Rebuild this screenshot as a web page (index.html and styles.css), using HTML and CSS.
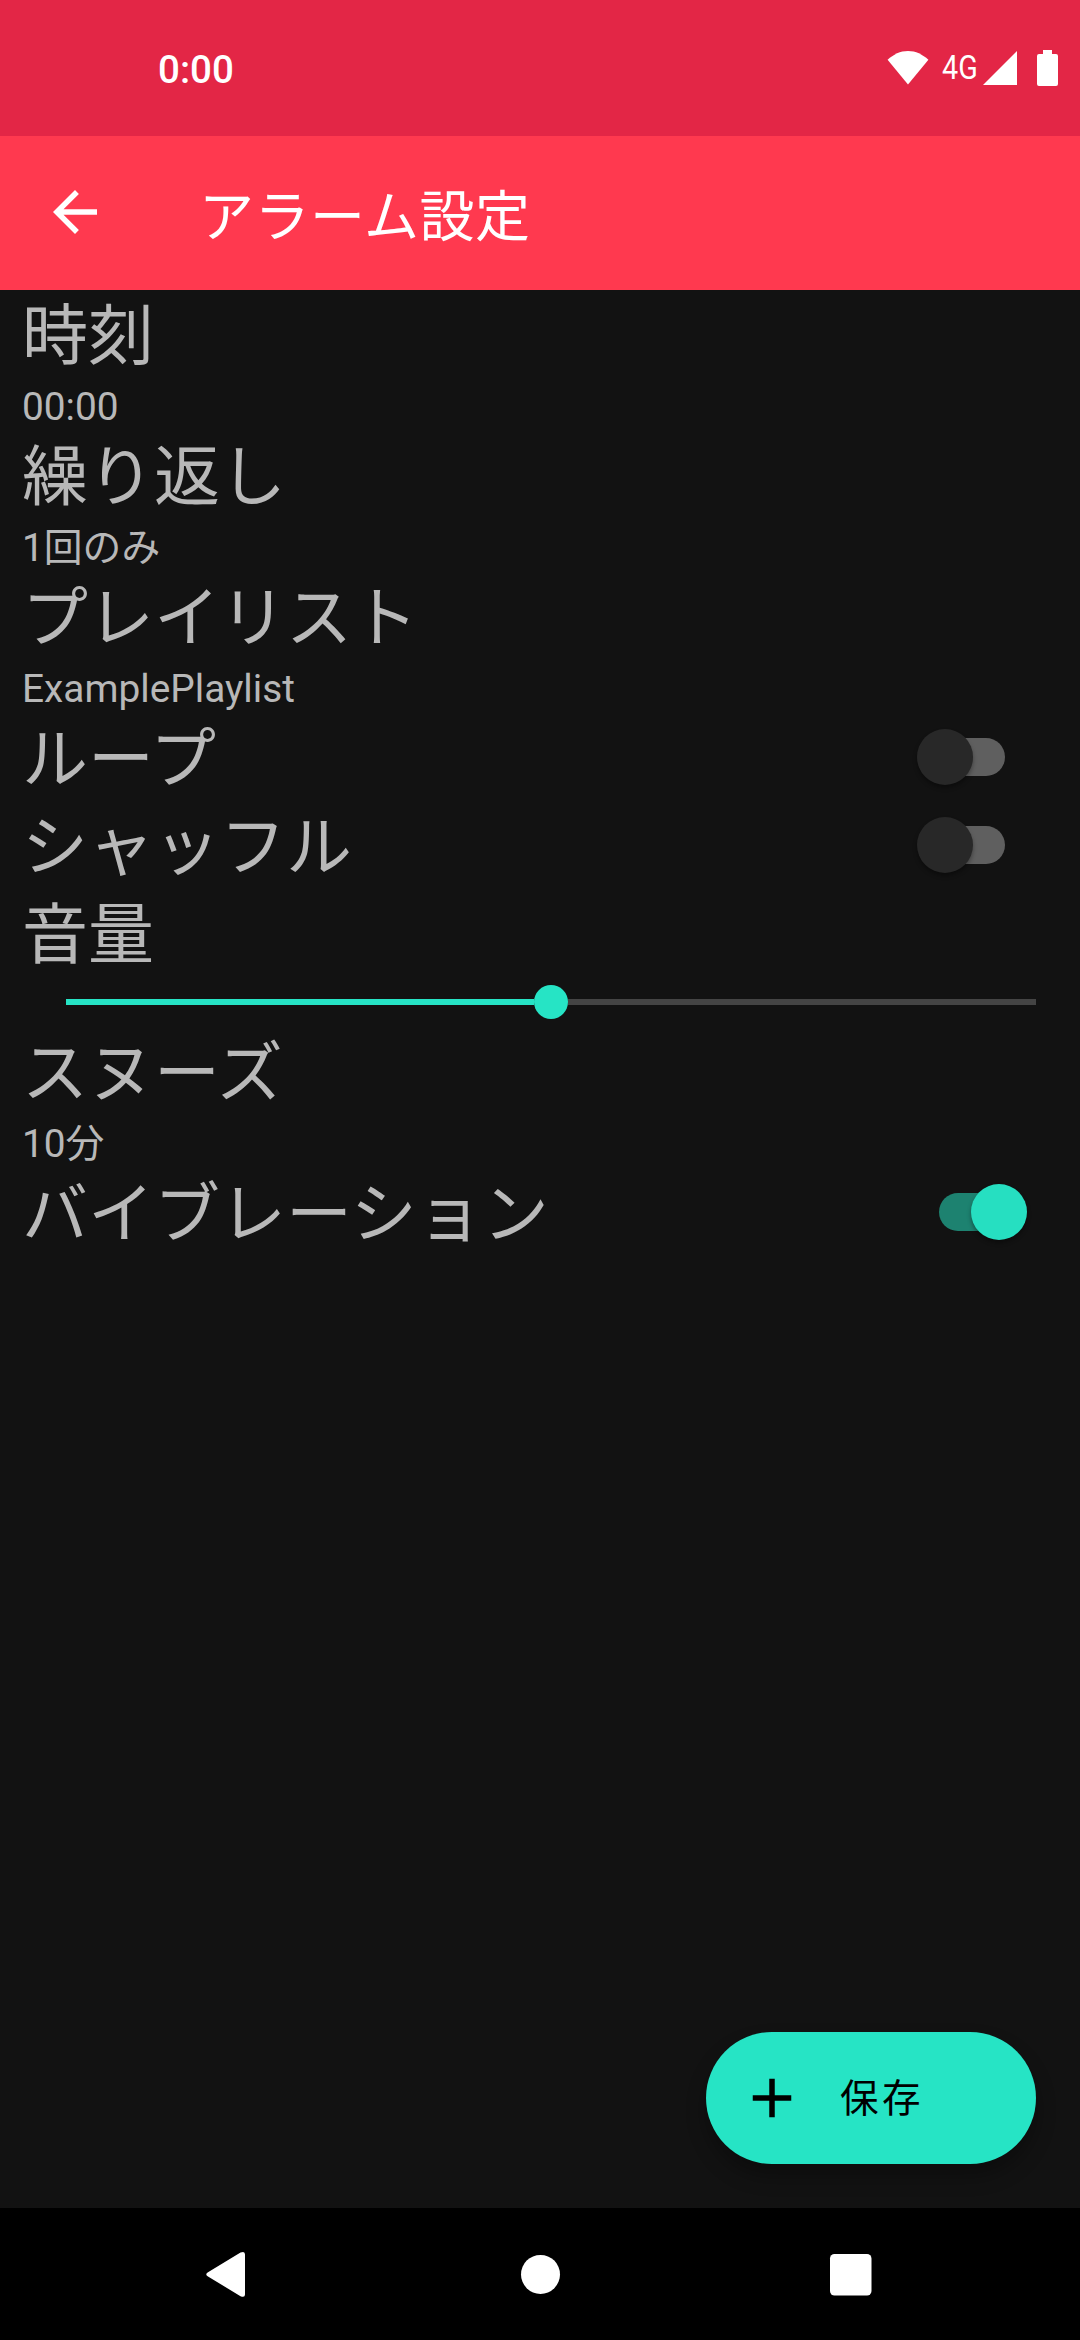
FILE: index.html
```html
<!DOCTYPE html>
<html lang="ja">
<head>
<meta charset="utf-8">
<title>アラーム設定</title>
<link rel="stylesheet" href="styles.css">
</head>
<body>
<div class="screen">
  <header class="status-bar">
    <span class="clock">0:00</span>
    <div class="status-icons">
      <svg class="wifi" viewBox="0 0 42 36"><path d="M21 35.500 0 10C6 4.500 13 1 21 1s15 3.500 21 9z"/></svg>
      <span class="network">4G</span>
      <svg class="signal" viewBox="0 0 34 35"><path d="M0 35 34 1v34z"/></svg>
      <svg class="battery" viewBox="0 0 21 36"><path d="M6 0h9v4h4q2 0 2 2v28q0 2-2 2H2q-2 0-2-2V6q0-2 2-2h4z"/></svg>
    </div>
  </header>
  <div class="app-bar">
    <svg class="back" viewBox="0 0 24 24"><path d="M20 11H7.830l5.590-5.590L12 4l-8 8 8 8 1.410-1.410L7.830 13H20v-2z"/></svg>
    <h1 class="title">アラーム設定</h1>
  </div>
  <main class="settings">
    <div class="label">時刻</div>
    <div class="value">00:00</div>
    <div class="label">繰り返し</div>
    <div class="value">1回のみ</div>
    <div class="label">プレイリスト</div>
    <div class="value">ExamplePlaylist</div>
    <div class="toggle-row inset"><span class="label">ループ</span><span class="switch"><span class="thumb"></span></span></div>
    <div class="toggle-row inset"><span class="label">シャッフル</span><span class="switch"><span class="thumb"></span></span></div>
    <div class="label">音量</div>
    <div class="slider"><span class="filled"></span><span class="knob"></span><span class="rest"></span></div>
    <div class="label">スヌーズ</div>
    <div class="value">10分</div>
    <div class="toggle-row"><span class="label">バイブレーション</span><span class="switch on"><span class="thumb"></span></span></div>
  </main>
  <div class="actions">
    <button class="save">
      <svg class="plus" viewBox="0 0 24 24"><path d="M19 13h-6v6h-2v-6H5v-2h6V5h2v6h6z"/></svg>
      <span class="save-text">保存</span>
    </button>
  </div>
  <nav class="nav-bar">
    <svg viewBox="0 0 60 60"><path d="M14 28.300 46.500 8.600Q51 6.500 51 10.500v40Q51 54 46.500 52.200L14 32.500q-3.500-2.100 0-4.200z"/></svg>
    <svg viewBox="0 0 60 60"><circle cx="32.500" cy="30.400" r="19.500"/></svg>
    <svg viewBox="0 0 60 60"><rect x="9" y="10" width="41.500" height="41.500" rx="4.500"/></svg>
  </nav>
</div>
</body>
</html>
```
FILE: styles.css
```css
* { box-sizing: border-box; }
body {
  margin: 0;
  background: #121212;
  font-family: Roboto, "Noto Sans CJK JP", sans-serif;
}
.screen {
  display: flex;
  flex-direction: column;
  width: 1080px;
  height: 2340px;
  background: #121212;
}
svg { display: block; flex: none; fill: currentColor; }

.status-bar {
  display: flex;
  justify-content: space-between;
  height: 136px;
  padding: 0 22px 0 158px;
  background: #e32646;
  color: #fff;
}
.clock { padding-top: 47px; font-size: 38.5px; font-weight: 500; line-height: 46px; }
.status-icons { display: flex; align-items: flex-start; padding-top: 50px; }
.wifi { width: 42px; height: 35px; }
.network {
  width: 41px;
  margin: -2px 0 0 13px;
  font-size: 33px;
  line-height: 40px;
  transform: scaleX(.87);
  transform-origin: left;
}
.signal { width: 34px; height: 35px; }
.battery { width: 21px; height: 36px; margin-left: 20px; }

.app-bar {
  display: flex;
  align-items: center;
  height: 154px;
  padding: 0 42px;
  background: #ff394f;
  color: #fff;
}
.back { width: 66px; height: 66px; margin-top: -3px; }
.title {
  margin: 0 0 0 91px;
  padding-top: 7px;
  font-size: 55px;
  font-weight: 400;
  line-height: 80px;
  letter-spacing: .55px;
}

.settings {
  display: flex;
  flex-direction: column;
  flex: 1;
  padding: 0 22px;
  color: #b8b8b8;
}
.label { height: 88px; padding-top: 3px; font-size: 66px; line-height: 88px; white-space: nowrap; }
.value { height: 53px; padding-top: 2px; font-size: 38.8px; line-height: 53px; white-space: nowrap; }
.toggle-row {
  display: flex;
  justify-content: space-between;
  align-items: center;
  height: 88px;
  padding-right: 37px;
}
.toggle-row.inset { padding-right: 53px; }

.switch {
  display: flex;
  align-items: center;
  width: 82px;
  height: 38px;
  border-radius: 19px;
  background: #5f5f5f;
}
.thumb {
  flex: none;
  width: 56px;
  height: 56px;
  margin-left: -6px;
  border-radius: 50%;
  background: #282828;
  box-shadow: 0 3px 4px rgba(0, 0, 0, .35);
}
.switch.on { background: #1d8270; justify-content: flex-end; }
.switch.on .thumb { margin: 0 -6px 0 0; background: #26dfc1; }

.slider { display: flex; align-items: center; height: 50px; padding: 0 22px 0 44px; }
.filled { width: 468px; height: 6px; background: #26e4c5; }
.knob { width: 34px; height: 34px; border-radius: 50%; background: #26e4c5; }
.rest { flex: 1; height: 6px; background: #444; }

.actions { display: flex; justify-content: flex-end; padding: 0 44px 44px 0; }
.save {
  display: flex;
  align-items: center;
  width: 330px;
  height: 132px;
  padding: 0 0 0 33px;
  border: 0;
  border-radius: 66px;
  background: #26e4c5;
  color: #000;
  font: inherit;
  box-shadow: 0 12px 20px rgba(0, 0, 0, .3);
}
.plus { width: 66px; height: 66px; }
.save-text { margin-left: 35px; padding-top: 2px; font-size: 38.5px; line-height: 56px; letter-spacing: 3.4px; }

.nav-bar {
  display: flex;
  justify-content: space-between;
  align-items: center;
  height: 132px;
  padding: 0 199px 0 194px;
  background: #000;
  color: #fff;
}
.nav-bar svg { width: 60px; height: 60px; }
```
